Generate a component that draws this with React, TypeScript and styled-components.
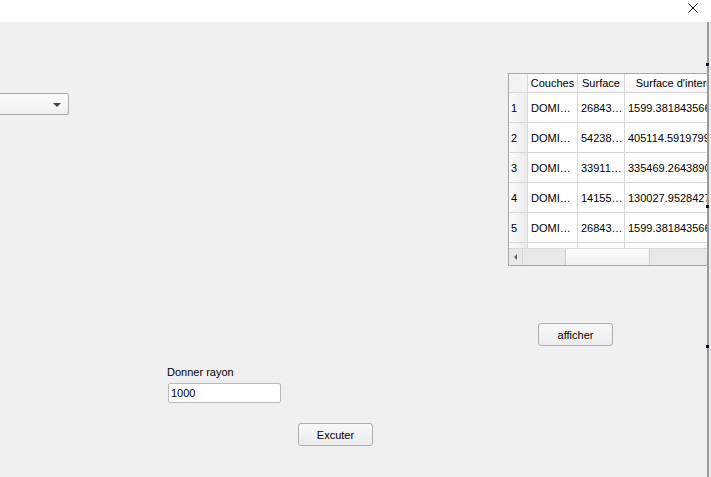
import React from "react";
import styled, { createGlobalStyle } from "styled-components";

const GlobalStyle = createGlobalStyle`
  html, body {
    margin: 0;
    padding: 0;
    background: #f0f0f0;
  }
  body {
    font-family: "Liberation Sans", Arial, sans-serif;
    font-size: 11px;
    color: #000;
  }
`;

const Window = styled.div`
  width: 711px;
  height: 477px;
  display: flex;
  flex-direction: column;
  overflow: hidden;
`;

const TitleBar = styled.div`
  height: 22px;
  flex-shrink: 0;
  background: #ffffff;
  display: flex;
  justify-content: flex-end;
`;

const CloseButton = styled.div`
  width: 27px;
  margin-right: 5px;
  padding-top: 3px;
  display: flex;
  justify-content: center;
  align-items: flex-start;
`;

const Body = styled.div`
  flex: 1;
  display: flex;
  min-height: 0;
`;

const Content = styled.div`
  flex: 1;
  min-width: 0;
  display: flex;
  flex-direction: column;
  align-items: flex-start;
  background: #f0f0f0;
  overflow: hidden;
`;

const Edge = styled.div`
  width: 4px;
  flex-shrink: 0;
  display: flex;
  flex-direction: column;
  align-items: flex-start;
  background: #ececec;
  border-left: 2px solid #9a9a9a;
  box-sizing: border-box;
`;

const EdgeMark = styled.div<{ $top: number }>`
  width: 3px;
  height: 3px;
  margin-left: -3px;
  margin-top: ${(p) => p.$top}px;
  background: #0a0a2a;
`;

const TopRow = styled.div`
  display: flex;
  align-items: flex-start;
  height: 243px;
  flex-shrink: 0;
`;

const Combo = styled.div`
  width: 69px;
  height: 22px;
  margin-top: 71px;
  flex-shrink: 0;
  box-sizing: border-box;
  border: 1px solid #acacac;
  border-left: none;
  border-radius: 0 3px 3px 0;
  background: linear-gradient(#fbfbfb, #f0f0f0);
  display: flex;
  justify-content: flex-end;
  align-items: center;
  padding-right: 7px;
`;

const ComboArrow = styled.div`
  width: 0;
  height: 0;
  border-left: 4px solid transparent;
  border-right: 4px solid transparent;
  border-top: 4px solid #404040;
  margin-top: 1px;
`;

const TableFrame = styled.div`
  width: 240px;
  height: 193px;
  margin-top: 51px;
  margin-left: 439px;
  flex-shrink: 0;
  box-sizing: border-box;
  border: 1px solid #a8a8a8;
  background: #ffffff;
  display: flex;
  flex-direction: column;
`;

const Viewport = styled.div`
  flex: 1;
  overflow: hidden;
`;

const Row = styled.div<{ $header?: boolean }>`
  display: flex;
  height: ${(p) => (p.$header ? 19 : 30)}px;
  box-sizing: border-box;
  border-bottom: 1px solid #d8d8d8;
`;

const Cell = styled.div<{ $w: number; $center?: boolean }>`
  width: ${(p) => p.$w}px;
  flex-shrink: 0;
  box-sizing: border-box;
  border-right: 1px solid #d8d8d8;
  padding: 0 3px;
  display: flex;
  align-items: center;
  justify-content: ${(p) => (p.$center ? "center" : "flex-start")};
  white-space: nowrap;
  overflow: hidden;
`;

const HeaderCell = styled(Cell)`
  background: linear-gradient(#ffffff, #f6f6f6);
`;

const RowHead = styled(Cell)`
  background: linear-gradient(to right, #fbfbfb, #ececec);
  padding: 0 2px;
`;

const Corner = styled(Cell)`
  background: #f3f3f3;
`;

const Scrollbar = styled.div`
  height: 17px;
  flex-shrink: 0;
  box-sizing: border-box;
  border-top: 1px solid #d8d8d8;
  background: #e8e8e8;
  display: flex;
`;

const ScrollArrow = styled.div`
  width: 14px;
  box-sizing: border-box;
  border-right: 1px solid #d4d4d4;
  display: flex;
  align-items: center;
  justify-content: center;
  &::before {
    content: "";
    border-top: 3px solid transparent;
    border-bottom: 3px solid transparent;
    border-right: 3px solid #606060;
  }
`;

const Track = styled.div`
  flex: 1;
  display: flex;
  padding-left: 42px;
`;

const Thumb = styled.div`
  width: 85px;
  box-sizing: border-box;
  border-left: 1px solid #cdcdcd;
  border-right: 1px solid #cdcdcd;
  background: linear-gradient(#fdfdfd, #f1f1f1);
`;

const Button = styled.div<{ $left: number; $top: number }>`
  width: 75px;
  height: 23px;
  margin-left: ${(p) => p.$left}px;
  margin-top: ${(p) => p.$top}px;
  flex-shrink: 0;
  box-sizing: border-box;
  border: 1px solid #adadad;
  border-radius: 3px;
  background: linear-gradient(#f8f8f8, #ececec);
  display: flex;
  align-items: center;
  justify-content: center;
`;

const Label = styled.div`
  margin-left: 167px;
  margin-top: 20px;
  line-height: 13px;
`;

const TextInput = styled.div`
  width: 113px;
  height: 20px;
  margin-left: 168px;
  margin-top: 4px;
  box-sizing: border-box;
  border: 1px solid #b9b9b9;
  border-radius: 2px;
  background: #ffffff;
  padding-left: 2px;
  display: flex;
  align-items: center;
`;

const cols = [19, 50, 47, 128];

const rows = [
  ["DOMI…", "26843…", "1599.381843566"],
  ["DOMI…", "54238…", "405114.5919799"],
  ["DOMI…", "33911…", "335469.2643890"],
  ["DOMI…", "14155…", "130027.9528427"],
  ["DOMI…", "26843…", "1599.381843566"],
];

export default function App() {
  return (
    <Window>
      <GlobalStyle />
      <TitleBar>
        <CloseButton>
          <svg width="10" height="10" viewBox="0 0 10 10">
            <path d="M0.5 0.5 L9.5 9.5 M9.5 0.5 L0.5 9.5" stroke="#111" strokeWidth="1" fill="none" />
          </svg>
        </CloseButton>
      </TitleBar>
      <Body>
        <Content>
          <TopRow>
            <Combo>
              <ComboArrow />
            </Combo>
            <TableFrame>
              <Viewport>
                <Row $header>
                  <Corner $w={cols[0]} />
                  <HeaderCell $w={cols[1]} $center>Couches</HeaderCell>
                  <HeaderCell $w={cols[2]} $center>Surface</HeaderCell>
                  <HeaderCell $w={cols[3]} $center>Surface d'intersection</HeaderCell>
                </Row>
                {rows.map((r, i) => (
                  <Row key={i}>
                    <RowHead $w={cols[0]}>{i + 1}</RowHead>
                    <Cell $w={cols[1]}>{r[0]}</Cell>
                    <Cell $w={cols[2]}>{r[1]}</Cell>
                    <Cell $w={cols[3]}>{r[2]}</Cell>
                  </Row>
                ))}
                <Row>
                  <RowHead $w={cols[0]} />
                  <Cell $w={cols[1]} />
                  <Cell $w={cols[2]} />
                  <Cell $w={cols[3]} />
                </Row>
              </Viewport>
              <Scrollbar>
                <ScrollArrow />
                <Track>
                  <Thumb />
                </Track>
              </Scrollbar>
            </TableFrame>
          </TopRow>
          <Button $left={538} $top={58}>afficher</Button>
          <Label>Donner rayon</Label>
          <TextInput>1000</TextInput>
          <Button $left={298} $top={20}>Excuter</Button>
        </Content>
        <Edge>
          <EdgeMark $top={41} />
          <EdgeMark $top={139} />
          <EdgeMark $top={137} />
        </Edge>
      </Body>
    </Window>
  );
}
